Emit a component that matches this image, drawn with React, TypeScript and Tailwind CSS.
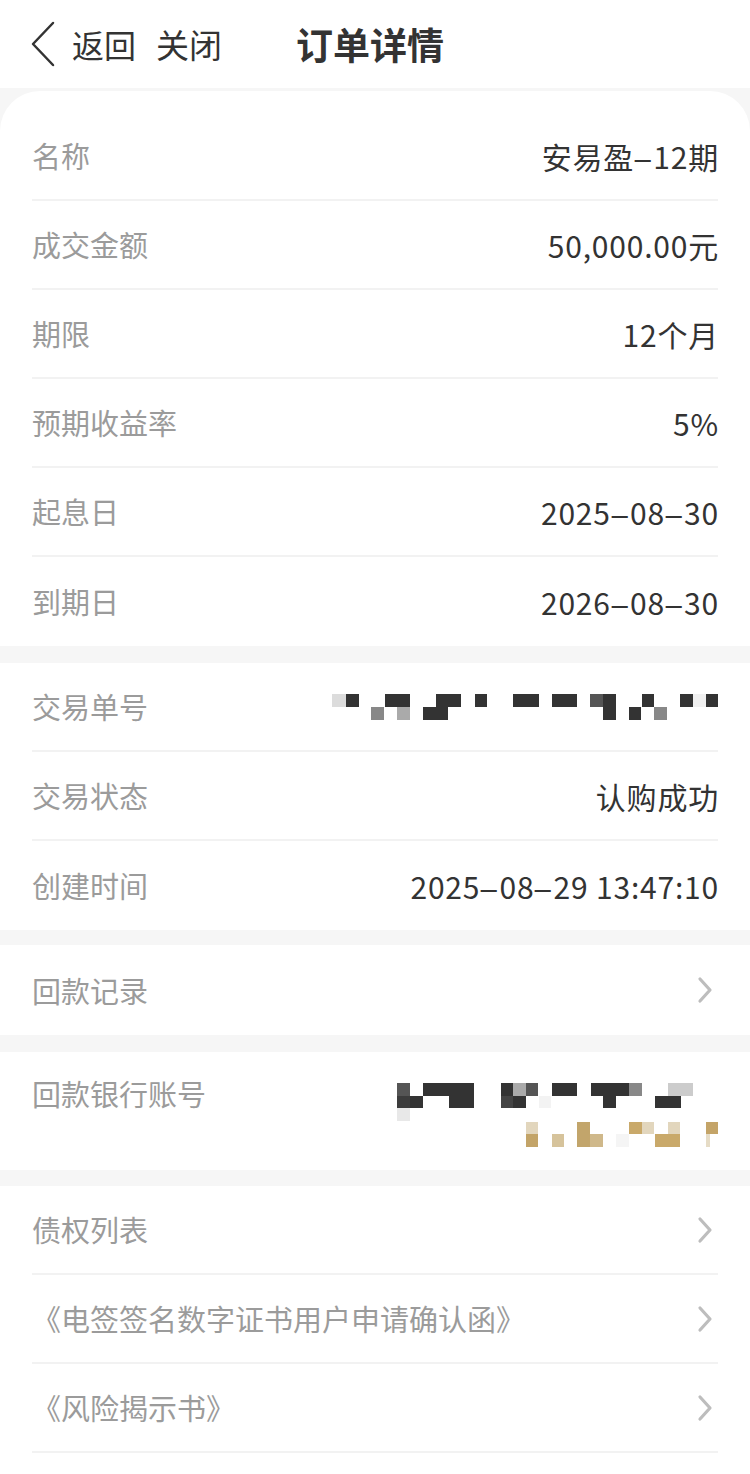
import React from "react";

const FONT = { fontFamily: '"Noto Sans CJK SC", "Noto Sans", sans-serif' };

type Px = [number, number, number, number, string];

const mosaic1: Px[] = [
  [0, 0, 14, 13, "#dcdcdc"],
  [14, 0, 13, 13, "#333"],
  [53, 0, 25, 13, "#333"],
  [39, 13, 13, 13, "#888"],
  [65, 13, 13, 13, "#aaa"],
  [104, 0, 25, 13, "#333"],
  [91, 13, 25, 13, "#333"],
  [143, 0, 12, 13, "#333"],
  [181, 0, 26, 13, "#333"],
  [220, 0, 25, 13, "#333"],
  [258, 0, 13, 13, "#555"],
  [271, 0, 13, 26, "#333"],
  [297, 13, 12, 13, "#333"],
  [310, 0, 12, 13, "#333"],
  [322, 13, 13, 13, "#888"],
  [348, 0, 13, 13, "#333"],
  [361, 0, 13, 13, "#f0f0f0"],
  [374, 0, 12, 13, "#333"],
];

const mosaic2: Px[] = [
  [0, 0, 13, 13, "#555"],
  [26, 0, 51, 13, "#333"],
  [0, 13, 13, 12, "#3c3c3c"],
  [13, 13, 13, 12, "#333"],
  [52, 13, 25, 12, "#333"],
  [0, 25, 13, 13, "#e8e8e8"],
  [104, 0, 12, 13, "#333"],
  [116, 0, 13, 13, "#aaa"],
  [129, 0, 12, 13, "#555"],
  [104, 13, 12, 12, "#444"],
  [116, 13, 13, 12, "#333"],
  [142, 13, 12, 12, "#f3f3f3"],
  [155, 0, 25, 13, "#333"],
  [194, 0, 38, 13, "#333"],
  [232, 0, 13, 13, "#888"],
  [206, 13, 13, 12, "#333"],
  [271, 0, 25, 13, "#cccccc"],
  [258, 13, 26, 12, "#333"],
  [129, 39, 12, 12, "#e2d6bd"],
  [129, 51, 12, 13, "#c3a468"],
  [155, 51, 12, 13, "#d6c39b"],
  [180, 39, 13, 25, "#c2a56b"],
  [193, 51, 13, 13, "#cfb88a"],
  [219, 51, 13, 13, "#f5f5f5"],
  [232, 39, 13, 12, "#c9a96a"],
  [245, 39, 12, 12, "#e2d6bd"],
  [271, 39, 12, 12, "#e2d6bd"],
  [258, 51, 25, 13, "#c9a96a"],
  [309, 39, 12, 12, "#c4a468"],
  [309, 51, 4, 13, "#e6dcc6"],
];

function Mosaic({ px, w, h }: { px: Px[]; w: number; h: number }) {
  return (
    <svg width={w} height={h} viewBox={`0 0 ${w} ${h}`} className="block">
      {px.map(([x, y, ww, hh, c], i) => (
        <rect key={i} x={x} y={y} width={ww} height={hh} fill={c} />
      ))}
    </svg>
  );
}

function Chevron() {
  return (
    <svg width="20" height="28" viewBox="0 0 20 28" className="block">
      <path d="M5 3 L15 14 L5 25" fill="none" stroke="#bdbdbd" strokeWidth="3.2" strokeLinecap="round" strokeLinejoin="round" />
    </svg>
  );
}

function Val({ text }: { text: string }) {
  const parts = text.split("-");
  return (
    <span className="text-[30px] text-[#333] leading-none tracking-[0.8px] mr-[-1px]">
      {parts.map((p, i) => (
        <React.Fragment key={i}>
          {i > 0 && <span className="inline-block mx-[4px] scale-x-[2.1]">-</span>}
          {p}
        </React.Fragment>
      ))}
    </span>
  );
}

function Row({
  label,
  value,
  border = true,
  arrow = false,
  h = "h-[89px]",
}: {
  label: string;
  value?: React.ReactNode;
  border?: boolean;
  arrow?: boolean;
  h?: string;
}) {
  return (
    <div
      className={`flex items-center justify-between ${h} ${
        border ? "border-b-2 border-[#f2f2f2]" : ""
      }`}
    >
      <span className="text-[29px] text-[#9b9b9b] leading-none">{label}</span>
      {arrow ? (
        <div className="mr-[3px]">
          <Chevron />
        </div>
      ) : typeof value === "string" ? (
        <Val text={value} />
      ) : (
        value
      )}
    </div>
  );
}

export default function App() {
  return (
    <div className="w-[750px] min-h-[1474px] bg-[#f6f6f6]" style={FONT}>
      {/* header */}
      <div className="h-[88px] bg-white flex items-center">
        <svg width="30" height="46" viewBox="0 0 30 46" className="ml-[30px] block">
          <path d="M23 2 L3 23 L23 44" fill="none" stroke="#333" strokeWidth="2.5" strokeLinecap="round" strokeLinejoin="round" />
        </svg>
        <span className="ml-[12px] text-[32px] text-[#333] leading-none">返回</span>
        <span className="ml-[20px] text-[33px] text-[#333] leading-none">关闭</span>
        <span className="ml-[74px] text-[37px] font-semibold text-[#333] leading-none">订单详情</span>
      </div>

      {/* section 1 */}
      <div className="mt-[3px] bg-white rounded-t-[40px] pt-[21px] px-[32px]">
        <Row label="名称" value="安易盈-12期" />
        <Row label="成交金额" value="50,000.00元" />
        <Row label="期限" value="12个月" />
        <Row label="预期收益率" value="5%" />
        <Row label="起息日" value="2025-08-30" />
        <Row label="到期日" value="2026-08-30" border={false} />
      </div>

      {/* section 2 */}
      <div className="mt-[17px] bg-white px-[32px]">
        <Row label="交易单号" value={<Mosaic px={mosaic1} w={386} h={26} />} />
        <Row label="交易状态" value="认购成功" />
        <Row label="创建时间" value="2025-08-29 13:47:10" border={false} />
      </div>

      {/* section 3 */}
      <div className="mt-[15px] bg-white px-[32px]">
        <Row label="回款记录" arrow border={false} h="h-[90px]" />
      </div>

      {/* section 4 */}
      <div className="mt-[17px] bg-white px-[32px] h-[118px] flex justify-between">
        <span className="mt-[27px] text-[29px] text-[#9b9b9b] leading-none">回款银行账号</span>
        <div className="mt-[31px]">
          <Mosaic px={mosaic2} w={321} h={64} />
        </div>
      </div>

      {/* section 5 */}
      <div className="mt-[16px] bg-white px-[32px] pb-[21px]">
        <Row label="债权列表" arrow />
        <Row label="《电签签名数字证书用户申请确认函》" arrow />
        <Row label="《风险揭示书》" arrow />
      </div>
    </div>
  );
}
